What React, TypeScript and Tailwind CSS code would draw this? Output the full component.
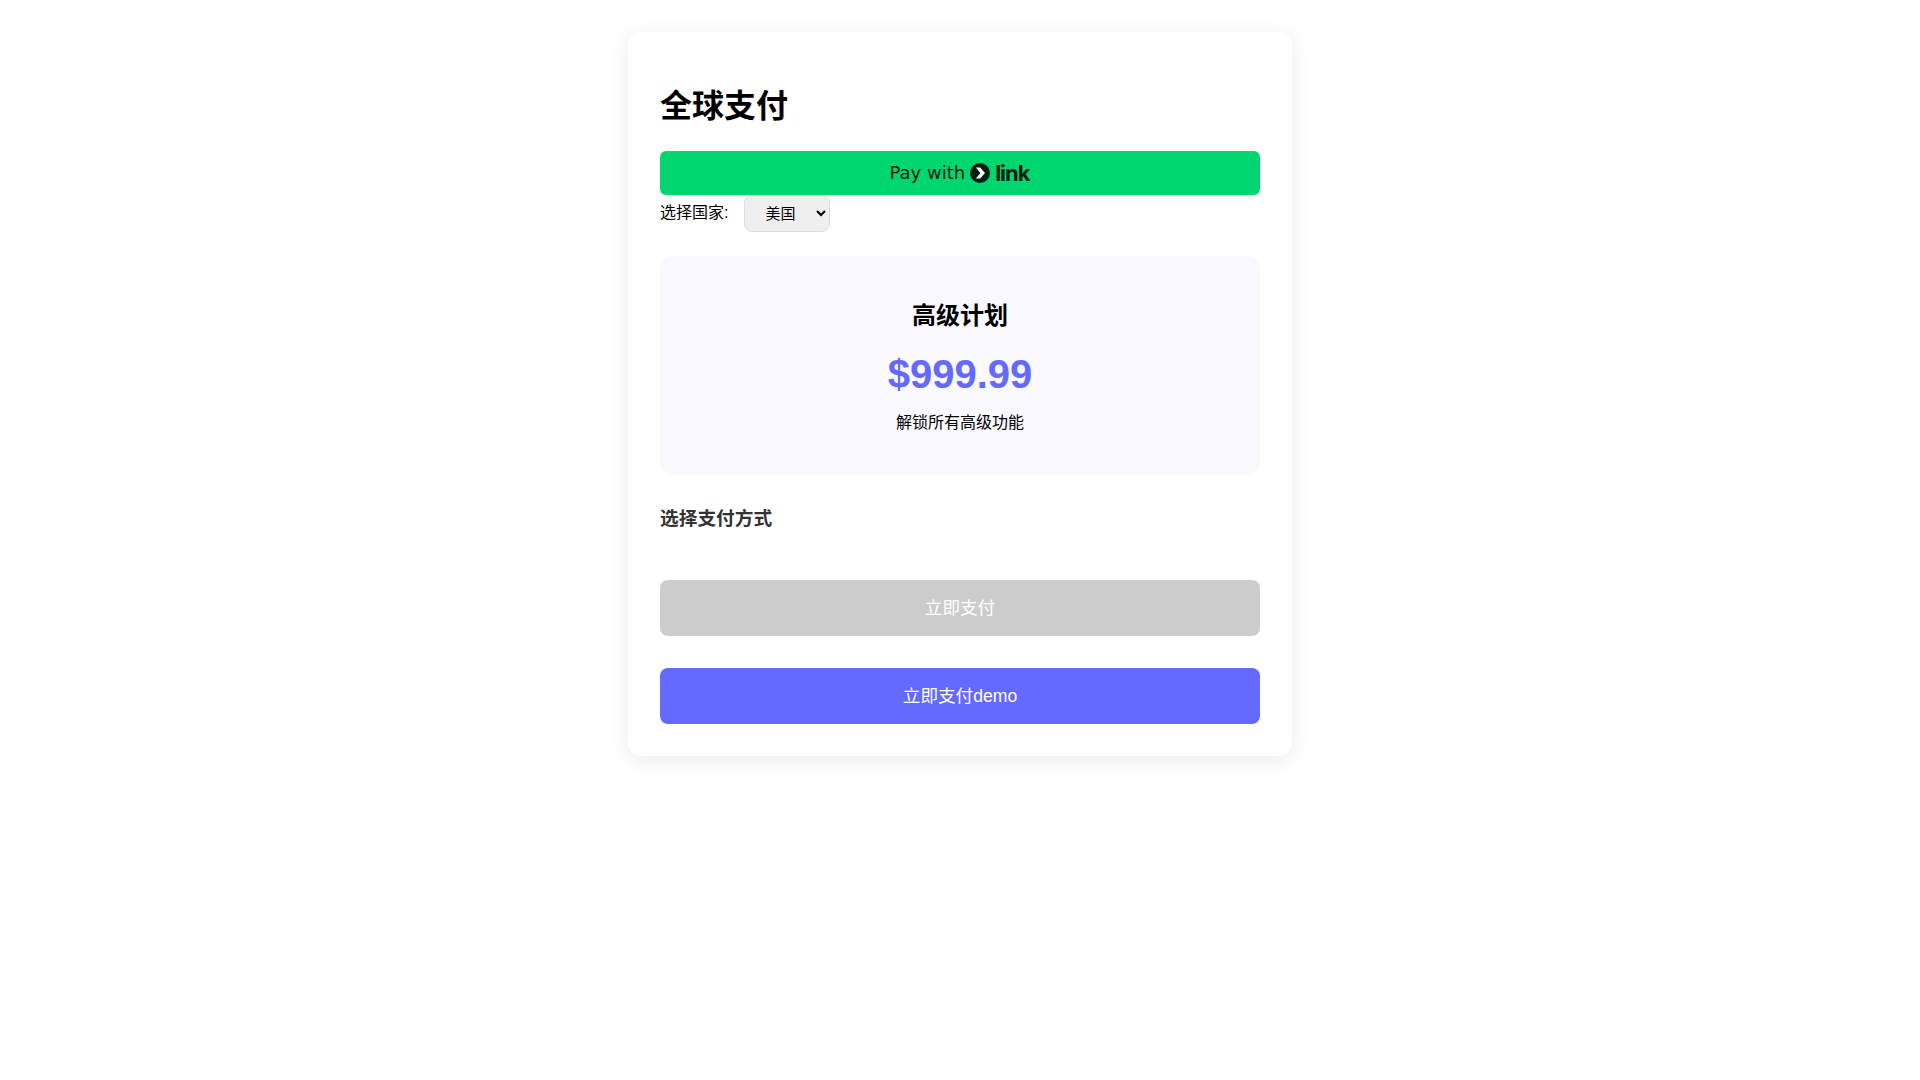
const cjk = 'font-["Liberation_Sans","Noto_Sans_CJK_SC",sans-serif]'

function LinkLogo() {
  return (
    <span className="ml-[5px] inline-flex items-center">
      <svg width="20" height="20" viewBox="0 0 20 20" className="block">
        <circle cx="10" cy="10" r="10" fill="#011e0f" />
        <path d="M5.800 4.400h4.400L15 10l-4.800 5.600H5.800L10.400 10z" fill="#ffffff" />
      </svg>
      <span className='ml-[5px] font-["Inter",sans-serif] text-[22px] font-bold leading-none tracking-[-1px] text-[#011e0f]'>
        link
      </span>
    </span>
  )
}

export default function App() {
  return (
    <div className={`min-h-[1080px] bg-white pt-8 text-black ${cjk}`}>
      <div className="mx-auto w-[664px] rounded-xl bg-white p-8 shadow-[0_4px_20px_rgba(0,0,0,0.08)]">
        <h1 className="mt-[19px] mb-[22px] text-[32px] font-bold leading-[46px]">全球支付</h1>

        <button
          type="button"
          className="flex h-11 w-full items-center justify-center rounded-md bg-[#00d66f] pr-[1px] text-[#011e0f]"
        >
          <span className='pb-[2px] font-["DejaVu_Sans",sans-serif] text-[18px]'>Pay with</span>
          <LinkLogo />
        </button>

        <div className="flex items-center">
          <label className="mr-4 pb-[1px] text-base">选择国家:</label>
          <select className="h-[37px] w-[86px] rounded-lg border border-[#ddd] bg-[#efefef] px-4 text-[15px]">
            <option>美国</option>
          </select>
        </div>

        <div className="mt-6 h-[218px] rounded-xl bg-[#f9f9ff] pt-[37px] text-center">
          <h2 className="text-2xl font-bold leading-[46px]">高级计划</h2>
          <div className="mt-[12px] text-[40px] leading-[46px] font-bold text-[#6469ff]">$999.99</div>
          <p className="mt-[14px] text-base leading-[23px]">解锁所有高级功能</p>
        </div>

        <h3 className="mt-[23px] text-[18.72px] font-bold leading-[44px] text-[#333]">选择支付方式</h3>

        <button
          type="button"
          disabled
          className="mt-[39px] h-14 w-full rounded-lg bg-[#ccc] text-[17.6px] text-white"
        >
          立即支付
        </button>
        <button
          type="button"
          className="mt-8 h-14 w-full rounded-lg bg-[#6469ff] text-[17.6px] text-white"
        >
          立即支付demo
        </button>
      </div>
    </div>
  )
}
